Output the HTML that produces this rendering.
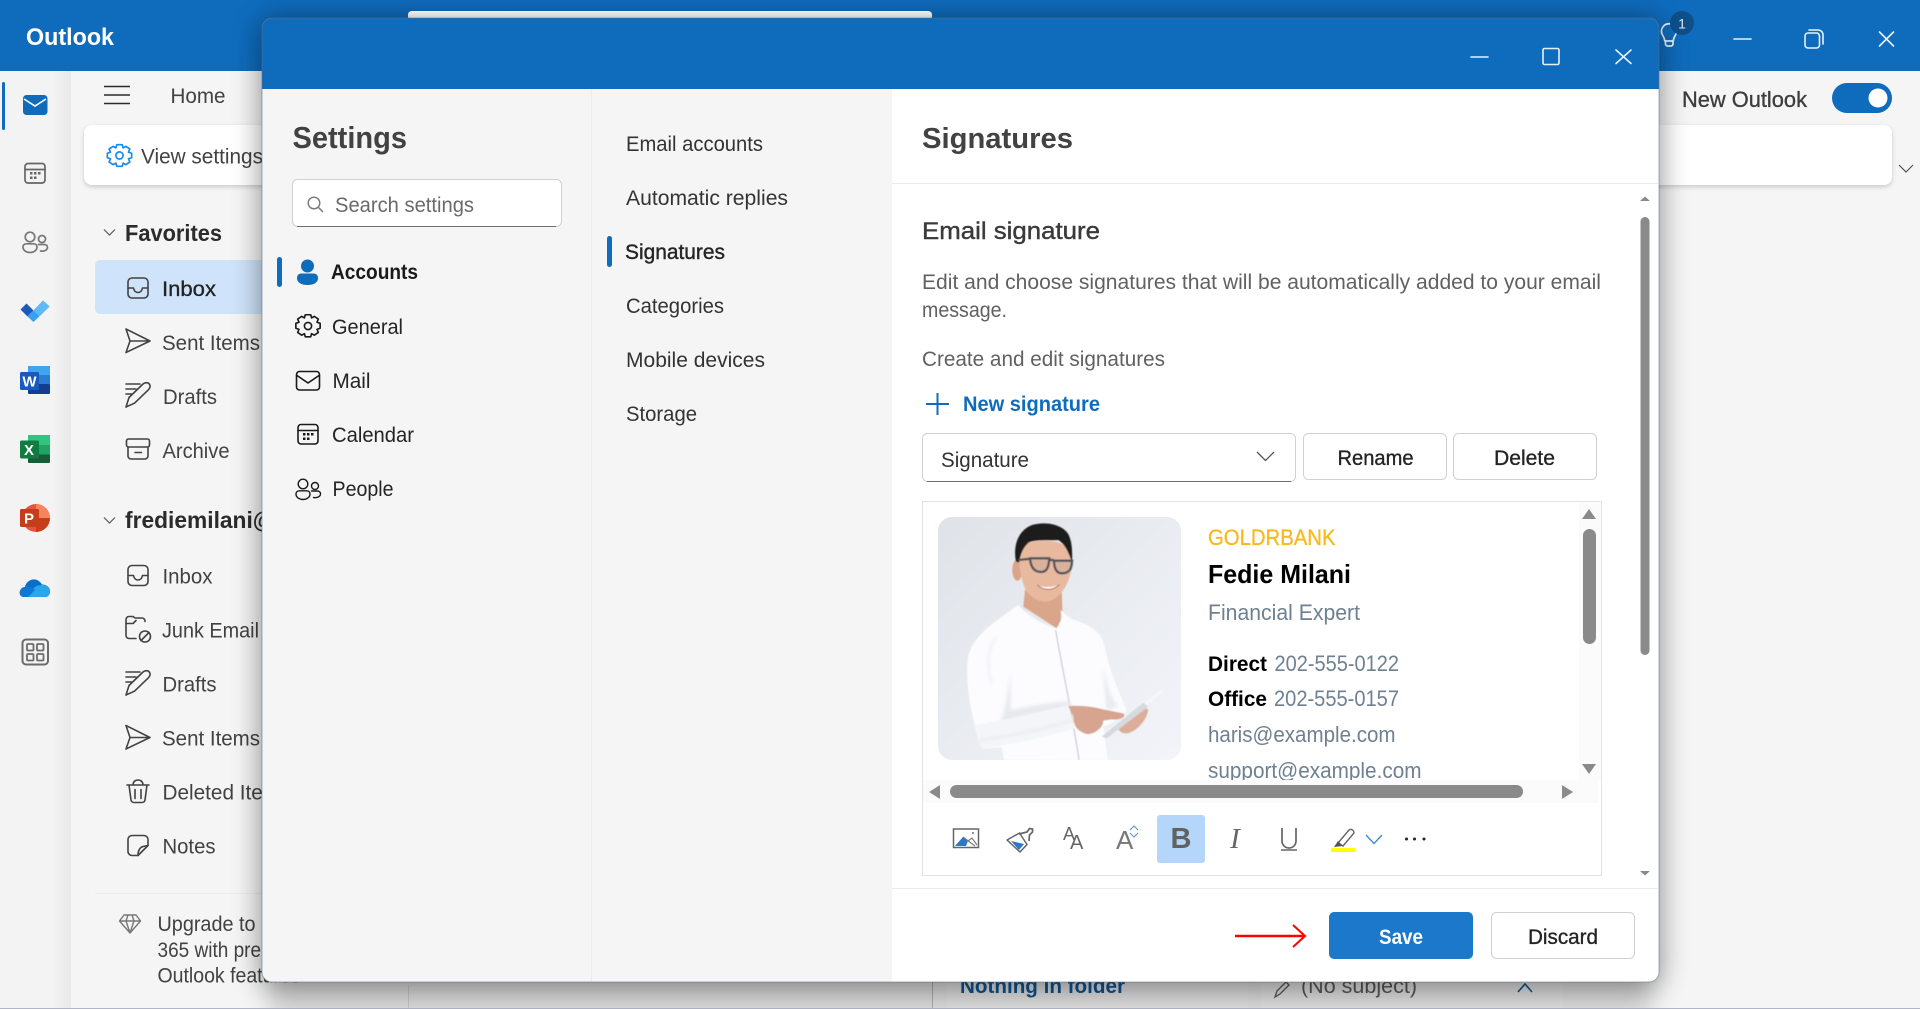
<!DOCTYPE html>
<html lang="en"><head><meta charset="utf-8"><title>Outlook Settings</title>
<style>
html,body{margin:0;padding:0;background:#f5f5f5;width:1920px;height:1009px;overflow:hidden}
svg{display:block}
text{font-family:"Liberation Sans",sans-serif;font-size:21.5px;fill:#424242}
.d{fill:#242424}
.b{font-weight:700}
.g{fill:#616161}
.t{fill:#6f8090;font-size:22px}
.ic{fill:none;stroke:#424242;stroke-width:1.6;stroke-linecap:round;stroke-linejoin:round}
.ik{fill:none;stroke:#1a1a1a;stroke-width:1.6;stroke-linecap:round;stroke-linejoin:round}
.ig{fill:none;stroke:#666;stroke-width:1.7;stroke-linecap:round;stroke-linejoin:round}
.w{fill:none;stroke:#e8f1fa;stroke-width:1.6;stroke-linecap:round;stroke-linejoin:round}
</style></head><body>
<svg width="1920" height="1009" viewBox="0 0 1920 1009" xmlns="http://www.w3.org/2000/svg">
<defs>
<filter id="sh" x="-10%" y="-10%" width="120%" height="120%"><feGaussianBlur stdDeviation="15"/></filter>
<filter id="cs" x="-10%" y="-30%" width="120%" height="160%"><feGaussianBlur stdDeviation="2.5"/></filter>
<filter id="bl1" x="-30%" y="-30%" width="160%" height="160%"><feGaussianBlur stdDeviation="5"/></filter>
<filter id="bl0" x="-5%" y="-5%" width="110%" height="110%"><feGaussianBlur stdDeviation="1.8"/></filter>
<filter id="bs" x="-5%" y="-200%" width="110%" height="500%"><feGaussianBlur stdDeviation="12"/></filter>
<linearGradient id="rail" x1="0" x2="1" y1="0" y2="0"><stop offset="0" stop-color="#f3f3f3"/><stop offset=".75" stop-color="#f3f3f3"/><stop offset="1" stop-color="#e9e9e9"/></linearGradient>
<linearGradient id="photo" x1="0" x2="1" y1="0" y2="1"><stop offset="0" stop-color="#dfe3e8"/><stop offset=".5" stop-color="#e9ecf1"/><stop offset="1" stop-color="#f2f4f9"/></linearGradient>
<linearGradient id="sliver" x1="0" x2="0" y1="0" y2="1"><stop offset="0" stop-color="#f0f0f0"/><stop offset="1" stop-color="#c9c9c9"/></linearGradient>
<clipPath id="pc"><rect x="938" y="517" width="243" height="243" rx="14"/></clipPath>
<clipPath id="dc"><rect x="262" y="18" width="1397" height="964" rx="10"/></clipPath>
<clipPath id="sc"><rect x="1200" y="510" width="375" height="270"/></clipPath>
<g id="inbox"><rect x="-10" y="-10" width="20" height="20" rx="4"/><path d="M-10 0h5.500c.6 3 2.500 4.500 4.500 4.500s3.900-1.500 4.500-4.500h5.500"/></g>
<g id="sent"><path d="M-12-12L12 0L-12 11.500L-8 0Z M-8 0H12"/></g>
<g id="drafts"><path d="M-12-11.500h14M-12-6.500h10M-12-1.500h6M-12 11.500l3-9.500l14-13.500c2-1.800 5-1.800 6.300 0c1.300 1.800 1 4-.8 5.700l-14 13.500Z"/></g>
</defs>

<!-- app background -->
<rect width="1920" height="1009" fill="#f5f5f5"/>
<rect y="71" width="71" height="938" fill="url(#rail)"/>
<rect width="1920" height="71" fill="#0f6cbd"/>
<rect x="0" y="1008" width="1920" height="1" fill="#b0b6c8"/>
<text x="26" y="45" textLength="88" lengthAdjust="spacingAndGlyphs" class="b" style="font-size:24px;fill:#fff">Outlook</text>

<!-- rail -->
<rect x="2" y="82" width="3" height="48" rx="1.500" fill="#0f6cbd"/>
<rect x="23" y="95" width="24.500" height="20" rx="3.500" fill="#0f6cbd"/>
<path d="M24 99l11 7l11-7" fill="none" stroke="#fff" stroke-width="1.600"/>
<g class="ig"><rect x="25" y="163.500" width="20" height="19.500" rx="3"/><path d="M25 169.500h20"/></g>
<g fill="#666"><rect x="30" y="172" width="2.500" height="2.500"/><rect x="34" y="172" width="2.500" height="2.500"/><rect x="38" y="172" width="2.500" height="2.500"/><rect x="30" y="176.500" width="2.500" height="2.500"/><rect x="34" y="176.500" width="2.500" height="2.500"/></g>
<g class="ig" style="stroke:#777"><circle cx="30" cy="237" r="4.800"/><circle cx="42" cy="239" r="3.500"/><path d="M23 247c0-2 1.500-3.200 3.500-3.200h7c2 0 3.500 1.200 3.500 3.200c0 3.500-3.500 5.500-7 5.500s-7-2-7-5.500Z"/><path d="M38.500 244.500h5.500c2 0 3.500 1 3.500 2.800c0 2.800-3 4.300-7 3.700"/></g>
<path d="M20.500 309.500l6-6l7 7l-6 6Z" fill="#185abd"/>
<path d="M27.500 316.500l6-6l9.500-10l6.500 6l-16 15.500Z" fill="#3aa0ee"/>
<path d="M33.500 310.500l9.500-10l6.500 6l-10 10Z" fill="#5fb9f6"/>
<!-- word -->
<rect x="28" y="366" width="22" height="9.500" fill="#41a5ee"/><rect x="28" y="375" width="22" height="9.500" fill="#2b7cd3"/><rect x="28" y="384" width="22" height="10" rx="1" fill="#103f91"/>
<rect x="20" y="372" width="19" height="18" rx="1.500" fill="#185abd"/>
<text x="29.500" y="386.500" text-anchor="middle" class="b" style="font-size:15px;fill:#fff">W</text>
<!-- excel -->
<rect x="28" y="435" width="22" height="10" fill="#33c481"/><rect x="28" y="445" width="22" height="9.500" fill="#107c41"/><rect x="28" y="454" width="22" height="9" rx="1" fill="#185c37"/><rect x="39" y="445" width="11" height="9.500" fill="#21a366"/>
<rect x="20" y="440.500" width="19" height="18" rx="1.500" fill="#107c41"/>
<text x="29" y="455" text-anchor="middle" class="b" style="font-size:15px;fill:#fff">X</text>
<!-- ppt -->
<circle cx="36" cy="518" r="14" fill="#e8533a"/><path d="M36 504a14 14 0 0 1 14 14h-14Z" fill="#f6845c"/><path d="M36 518h14a14 14 0 0 1-14 14Z" fill="#c43e1c"/>
<rect x="20" y="509" width="19" height="18" rx="1.500" fill="#c43e1c"/>
<text x="29" y="523.500" text-anchor="middle" class="b" style="font-size:15px;fill:#fff">P</text>
<!-- onedrive -->
<path d="M24 597c-6 0-6-9 1-10c1-6 8-9.500 13-6.500c2 1 3 2.500 4 4c5 0 8.500 3.500 8 7c0 3-2 5.500-5 5.500Z" fill="#0a6fc9"/>
<path d="M29 597c-3-1-2-6 2-6c3-4 6-6 11-6c5 0 8.500 3.500 8 7c0 3-2 5-5 5Z" fill="#28a8ea"/>
<path d="M20 592c.5-3 2-5 5-5c4-1 7 0 10 3c-3 2-5 7-9 7h-2c-3 0-4-2-4-5Z" fill="#0f78d4"/>
<g fill="none" stroke="#6b6b6b" stroke-width="2"><rect x="22.500" y="639.500" width="25.500" height="25" rx="3.500"/></g>
<g fill="none" stroke="#6b6b6b" stroke-width="1.800"><rect x="27" y="644" width="6.500" height="6.500" rx="1"/><rect x="37" y="644" width="6.500" height="6.500" rx="1"/><rect x="27" y="654" width="6.500" height="6.500" rx="1"/><rect x="37" y="654" width="6.500" height="6.500" rx="1"/></g>

<!-- nav top -->
<path d="M104 86.500h26M104 95h26M104 103.500h26" stroke="#2b2b2b" stroke-width="1.500"/>
<text x="170.500" y="103" textLength="55" lengthAdjust="spacingAndGlyphs">Home</text>
<rect x="84" y="127" width="1808" height="60" rx="8" fill="#000" opacity=".17" filter="url(#cs)"/>
<rect x="84" y="125" width="1808" height="60" rx="8" fill="#fff"/>
<g transform="translate(119.500 155.500) scale(.9)" fill="none" stroke="#1c8be6" stroke-width="1.900" stroke-linejoin="round"><circle r="4"/><path d="M-3-12h6l1 3.500l3-1.700l4.500 3l-1.500 3.500l3.500 1.200v5l-3.500 1.200l1.500 3.500l-4.500 3l-3-1.700l-1 3.500h-6l-1-3.500l-3 1.700l-4.500-3l1.500-3.500l-3.500-1.200v-5l3.500-1.200l-1.500-3.500l4.500-3l3 1.700Z"/></g>
<text x="141" y="163.500" textLength="122" lengthAdjust="spacingAndGlyphs">View settings</text>
<path d="M104 229.500l5.500 5.500l5.500-5.500" fill="none" stroke="#555" stroke-width="1.200"/>
<text x="125" y="241" textLength="97" lengthAdjust="spacingAndGlyphs" class="b" style="font-size:23px;fill:#2b2b2b">Favorites</text>
<rect x="95" y="260" width="190" height="54" rx="5" fill="#cfe4fa"/>
<use href="#inbox" x="138" y="288" class="ic"/>
<text x="162" y="296" textLength="54" lengthAdjust="spacingAndGlyphs" style="fill:#222;stroke:#222;stroke-width:.3">Inbox</text>
<use href="#sent" x="138" y="341" class="ic"/>
<text x="162" y="350" textLength="98" lengthAdjust="spacingAndGlyphs">Sent Items</text>
<use href="#drafts" x="138" y="395.500" class="ic"/>
<text x="163" y="404" textLength="54" lengthAdjust="spacingAndGlyphs">Drafts</text>
<g class="ic"><rect x="126.500" y="439" width="23" height="8" rx="2"/><path d="M128 447v9a3 3 0 0 0 3 3h14a3 3 0 0 0 3-3v-9M135 452.500h6.500"/></g>
<text x="162.500" y="458" textLength="67" lengthAdjust="spacingAndGlyphs">Archive</text>
<path d="M104 517.500l5.500 5.500l5.500-5.500" fill="none" stroke="#555" stroke-width="1.200"/>
<text x="125" y="528" textLength="150" lengthAdjust="spacingAndGlyphs" class="b" style="font-size:23px;fill:#2b2b2b">frediemilani@</text>
<use href="#inbox" x="138" y="575.500" class="ic"/>
<text x="162.500" y="583.500" textLength="50" lengthAdjust="spacingAndGlyphs">Inbox</text>
<g class="ic" transform="translate(0 .5)"><path d="M145 621v-.5a3 3 0 0 0-3-3h-7l-2-1.500h-4a3 3 0 0 0-3 3v16a3 3 0 0 0 3 3h7"/><path d="M126 623h7l3-3"/><circle cx="145" cy="636" r="5.500"/><path d="M141 640l8-8"/></g>
<text x="162" y="637.500" textLength="97" lengthAdjust="spacingAndGlyphs">Junk Email</text>
<use href="#drafts" x="138" y="683.500" class="ic"/>
<text x="162.500" y="691.500" textLength="54" lengthAdjust="spacingAndGlyphs">Drafts</text>
<use href="#sent" x="138" y="737.500" class="ic"/>
<text x="162" y="745.500" textLength="98" lengthAdjust="spacingAndGlyphs">Sent Items</text>
<g class="ic" transform="translate(0 .5)"><path d="M127 784.500h22M133 784.500c0-3 2-5 5-5s5 2 5 5M129 784.500l2 15a3 3 0 0 0 3 2.500h8a3 3 0 0 0 3-2.500l2-15M135 789v9M141 789v9"/></g>
<text x="162.500" y="799.500" textLength="128" lengthAdjust="spacingAndGlyphs">Deleted Items</text>
<g class="ic" transform="translate(0 .5)"><path d="M148 845v-6a4 4 0 0 0-4-4h-12a4 4 0 0 0-4 4v12a4 4 0 0 0 4 4h6Z"/><path d="M138 855c0-5 2-8 5-9l5-1"/></g>
<text x="162.500" y="853.500" textLength="53" lengthAdjust="spacingAndGlyphs">Notes</text>
<rect x="95" y="893" width="170" height="1" fill="#ebebeb"/>
<g fill="none" stroke="#777" stroke-width="1.400" stroke-linejoin="round"><path d="M124 915h12l4.500 6l-10.500 12l-10.500-12ZM119.500 921h21M126 921l4 12l4-12M126 921l2-6M134 921l-2-6"/></g>
<text x="157.500" y="931" textLength="98" lengthAdjust="spacingAndGlyphs" style="font-size:21px">Upgrade to</text>
<text x="157.500" y="957" textLength="150" lengthAdjust="spacingAndGlyphs" style="font-size:21px">365 with premium</text>
<text x="157.500" y="982.500" textLength="143" lengthAdjust="spacingAndGlyphs" style="font-size:21px">Outlook features</text>

<!-- right side chrome -->
<g class="w" style="stroke-width:1.700"><path d="M1662.500 35a7.500 7.500 0 1 1 13 0c-1.200 2-2 3.500-2.300 6h-8.400c-.3-2.500-1.100-4-2.300-6Z"/><path d="M1665.500 41v3a2 2 0 0 0 2 2h3.500a2 2 0 0 0 2-2v-3"/></g>
<circle cx="1682" cy="23" r="12" fill="#0f4f8a"/>
<text x="1682" y="28.500" text-anchor="middle" style="font-size:14px;fill:#dfe9f3">1</text>
<path d="M1734 39h17" class="w"/>
<g class="w"><rect x="1805" y="33" width="14.500" height="15" rx="3"/><path d="M1809 30h9a5 5 0 0 1 5 5v9"/></g>
<path d="M1879.500 32l14 14M1893.500 32l-14 14" class="w"/>
<text x="1682" y="107" textLength="125" lengthAdjust="spacingAndGlyphs" style="font-size:22.500px;fill:#3d3d3d;stroke:#3d3d3d;stroke-width:.35">New Outlook</text>
<rect x="1832" y="83" width="60" height="30" rx="15" fill="#0f6cbd"/>
<circle cx="1878" cy="98" r="9.500" fill="#fff"/>
<path d="M1899 165l7 7l7-7" fill="none" stroke="#555" stroke-width="1.200"/>

<!-- bottom reading pane pieces -->
<rect x="408" y="985" width="1" height="24" fill="#ddd"/>
<rect x="932" y="982" width="1" height="27" fill="#bdbdbd"/>
<rect x="947" y="982" width="301" height="26" fill="#f9f9f9"/>
<rect x="1261" y="982" width="302" height="26" fill="#f9f9f9"/>
<text x="960" y="993" textLength="165" lengthAdjust="spacingAndGlyphs" class="b" style="font-size:21px;fill:#115ea3">Nothing in folder</text>
<path d="M1275 997l2-6l9-9l3 3l-9 9Z" fill="none" stroke="#666" stroke-width="1.400"/>
<text x="1301" y="993" textLength="116" lengthAdjust="spacingAndGlyphs" style="font-size:21px;fill:#616161">(No subject)</text>
<path d="M1518 992l7-8l7 8" fill="none" stroke="#115ea3" stroke-width="1.600"/>
<rect x="270" y="960" width="1381" height="60" fill="#000" opacity=".13" filter="url(#bs)"/>
<rect x="0" y="1008" width="1920" height="1" fill="#b0b6c8"/>

<!-- top sliver behind dialog -->
<rect x="408" y="11" width="524" height="20" rx="4" fill="#f2f2f2"/>
<!-- dialog shadow -->
<rect x="262" y="20" width="1397" height="966" rx="10" fill="#000" opacity=".46" filter="url(#sh)"/>
<rect x="408" y="11" width="524" height="8" rx="4" fill="url(#sliver)"/>

<!-- dialog -->
<g clip-path="url(#dc)">
<rect x="262" y="18" width="1397" height="964" fill="#fff"/>
<rect x="262" y="89" width="630" height="893" fill="#f5f5f5"/>
<rect x="591" y="89" width="1" height="893" fill="#ebebeb"/>
<rect x="262" y="18" width="1397" height="71" fill="#0f6cbd"/>
</g>
<rect x="262" y="18" width="1397" height="964" rx="10" fill="none" stroke="#5b6f88" stroke-opacity=".55" stroke-width="1"/>
<path d="M1471 57h17" class="w"/>
<rect x="1543" y="48.500" width="16" height="16" rx="1.500" class="w"/>
<path d="M1616 50l15 13.500M1631 50l-15 13.500" class="w"/>

<!-- settings col -->
<text x="292.500" y="148" textLength="114.500" lengthAdjust="spacingAndGlyphs" class="b" style="font-size:31px;fill:#424242">Settings</text>
<rect x="292.500" y="179.500" width="269" height="47" rx="5" fill="#fff" stroke="#d1d1d1"/>
<path d="M297 226.500h259" stroke="#6e6e6e" stroke-width="1"/>
<g fill="none" stroke="#777" stroke-width="1.400"><circle cx="314" cy="203" r="5.800"/><path d="M318.500 207.500l4.500 4.500"/></g>
<text x="335" y="212" textLength="139" lengthAdjust="spacingAndGlyphs" class="g" style="font-size:21.500px;fill:#6a6a6a">Search settings</text>
<rect x="277" y="257" width="5" height="30" rx="2.500" fill="#0f6cbd"/>
<circle cx="307.500" cy="266" r="6.500" fill="#0f6cbd"/>
<path d="M297 278c0-3 2-4.500 4.500-4.500h12c2.500 0 4.500 1.500 4.500 4.500c0 5-5 7-10.500 7s-10.500-2-10.500-7Z" fill="#0f6cbd"/>
<text x="331" y="279" textLength="87" lengthAdjust="spacingAndGlyphs" class="b" style="fill:#1a1a1a;font-size:21px">Accounts</text>
<g transform="translate(308 326) scale(.9)" class="ik" style="stroke-width:1.800"><circle r="4"/><path d="M-3-12.500h6l1 3.500l3-1.700l4.500 3l-1.500 3.500l3.500 1.200v5.500l-3.500 1.200l1.500 3.500l-4.500 3l-3-1.700l-1 3.500h-6l-1-3.500l-3 1.700l-4.500-3l1.500-3.500l-3.500-1.200v-5.500l3.500-1.200l-1.500-3.500l4.500-3l3 1.700Z"/></g>
<text x="332" y="334" textLength="71" lengthAdjust="spacingAndGlyphs" class="d">General</text>
<g class="ik"><rect x="296.500" y="371.500" width="23" height="18.500" rx="3"/><path d="M297 375.500l11 7.500l11-7.500"/></g>
<text x="332.500" y="388" textLength="38" lengthAdjust="spacingAndGlyphs" class="d">Mail</text>
<g class="ik"><rect x="298" y="424.500" width="20" height="19.500" rx="3"/><path d="M298 430.500h20"/></g>
<g fill="#1a1a1a"><rect x="303" y="433" width="2.500" height="2.500"/><rect x="307" y="433" width="2.500" height="2.500"/><rect x="311" y="433" width="2.500" height="2.500"/><rect x="303" y="437.500" width="2.500" height="2.500"/><rect x="307" y="437.500" width="2.500" height="2.500"/></g>
<text x="332" y="442" textLength="82" lengthAdjust="spacingAndGlyphs" class="d">Calendar</text>
<g class="ik" style="stroke-width:1.400"><circle cx="303" cy="484" r="4.800"/><circle cx="315" cy="486" r="3.500"/><path d="M296 494c0-2 1.500-3.200 3.500-3.200h7c2 0 3.500 1.200 3.500 3.200c0 3.500-3.500 5.500-7 5.500s-7-2-7-5.500Z"/><path d="M311.500 491h5.500c2 0 3.500 1 3.500 2.800c0 2.800-3 4.300-7 3.700"/></g>
<text x="332.500" y="496" textLength="61" lengthAdjust="spacingAndGlyphs" class="d">People</text>

<!-- mid col -->
<text x="626" y="151" textLength="137" lengthAdjust="spacingAndGlyphs" class="d" style="fill:#333">Email accounts</text>
<text x="626" y="205" textLength="162" lengthAdjust="spacingAndGlyphs" class="d" style="fill:#333">Automatic replies</text>
<rect x="607" y="236" width="5" height="31" rx="2.500" fill="#0f6cbd"/>
<text x="625" y="259" textLength="100" lengthAdjust="spacingAndGlyphs" class="d" style="stroke:#242424;stroke-width:.4">Signatures</text>
<text x="626" y="313" textLength="98" lengthAdjust="spacingAndGlyphs" class="d" style="fill:#333">Categories</text>
<text x="626" y="367" textLength="139" lengthAdjust="spacingAndGlyphs" class="d" style="fill:#333">Mobile devices</text>
<text x="626" y="421" textLength="71" lengthAdjust="spacingAndGlyphs" class="d" style="fill:#333">Storage</text>

<!-- right -->
<text x="922" y="148" textLength="151" lengthAdjust="spacingAndGlyphs" class="b" style="font-size:29px;fill:#424242">Signatures</text>
<rect x="892" y="183" width="766" height="1" fill="#ebebeb"/>
<path d="M1640 201h10l-5-4.500Z" fill="#8a8a8a"/>
<rect x="1640.500" y="217" width="9" height="438" rx="4.500" fill="#8a8a8a"/>
<path d="M1640 871h10l-5 4.500Z" fill="#8a8a8a"/>
<text x="922" y="239" textLength="178" lengthAdjust="spacingAndGlyphs" style="font-size:24px;fill:#3a3a3a;stroke:#3a3a3a;stroke-width:.4">Email signature</text>
<text x="922" y="289" textLength="679" lengthAdjust="spacingAndGlyphs" class="g">Edit and choose signatures that will be automatically added to your email</text>
<text x="922" y="317" textLength="85" lengthAdjust="spacingAndGlyphs" class="g">message.</text>
<text x="922" y="366" textLength="243" lengthAdjust="spacingAndGlyphs" class="g">Create and edit signatures</text>
<path d="M926 404h23M937.500 393v22" stroke="#0f6cbd" stroke-width="2"/>
<text x="963" y="411" textLength="137" lengthAdjust="spacingAndGlyphs" class="b" style="fill:#0f6cbd;font-size:21px">New signature</text>
<rect x="922.500" y="433.500" width="373" height="48" rx="5" fill="#fff" stroke="#d1d1d1"/>
<path d="M927 481.500h364" stroke="#6e6e6e" stroke-width="1"/>
<text x="941" y="467" textLength="88" lengthAdjust="spacingAndGlyphs" class="d" style="fill:#333">Signature</text>
<path d="M1257 452l8.500 8.500l8.500-8.500" fill="none" stroke="#555" stroke-width="1.300"/>
<rect x="1303.500" y="433.500" width="143" height="46" rx="5" fill="#fff" stroke="#d1d1d1"/>
<text x="1337.500" y="465" textLength="76" lengthAdjust="spacingAndGlyphs" class="d" style="stroke:#242424;stroke-width:.35">Rename</text>
<rect x="1453.500" y="433.500" width="143" height="46" rx="5" fill="#fff" stroke="#d1d1d1"/>
<text x="1494" y="465" textLength="61" lengthAdjust="spacingAndGlyphs" class="d" style="stroke:#242424;stroke-width:.35">Delete</text>

<!-- editor box -->
<rect x="922.500" y="501.500" width="679" height="374" fill="#fff" stroke="#e2e2e2"/>
<rect x="1579" y="503" width="22" height="278" fill="#fbfbfb"/>
<rect x="923" y="780" width="675" height="23" fill="#fbfbfb"/>

<!-- photo -->
<g clip-path="url(#pc)">
<rect x="938" y="517" width="243" height="243" fill="url(#photo)"/>
<g transform="translate(930 510) scale(.33333)" filter="url(#bl0)">
<path d="M285 240L395 240L398 320L380 355L280 290Z" fill="#d9a68c"/>
<path d="M265 285C290 315 340 345 378 355C395 345 395 320 392 300L420 325C465 340 505 355 520 395C535 470 565 545 590 600L575 625L520 650L533 750L222 750L215 712L155 715C130 650 105 530 113 450C120 385 180 345 265 285Z" fill="#fcfcfe"/>
<path d="M377 360C395 470 425 600 447 750" fill="none" stroke="#c4c8cf" stroke-width="3.500"/>
<path d="M245 470C238 530 245 570 240 600C300 590 360 575 420 575L425 590C360 605 290 615 210 640C230 590 235 530 245 470Z" fill="#e6e9ee" filter="url(#bl1)"/>
<path d="M520 470C530 520 540 560 565 590L530 600C525 560 520 520 520 470Z" fill="#e8ebf0" filter="url(#bl1)"/>
<path d="M200 380C170 420 170 470 185 520" fill="none" stroke="#eceef2" stroke-width="6" filter="url(#bl1)"/>
<path d="M135 645C200 635 320 610 415 585L435 655C350 680 240 705 155 715Z" fill="#f4f5f8"/>
<path d="M150 690C230 680 330 660 430 630" fill="none" stroke="#e2e5ea" stroke-width="4" filter="url(#bl1)"/>
<path d="M415 588C450 585 490 590 520 598L580 610C590 620 570 632 545 628L520 632C520 655 490 675 470 672C445 665 430 650 430 620Z" fill="#d7a58f"/>
<path d="M565 650L640 590L655 600C650 630 620 665 590 670C575 670 565 665 565 650Z" fill="#dcae99"/>
<path d="M515 680L695 538L698 546L530 682Z" fill="#f6f7f9"/>
<path d="M515 680L640 578L655 590L530 685Z" fill="#d6dade"/>
<ellipse cx="262" cy="180" rx="15" ry="32" fill="#d9a488"/>
<path d="M268 120C268 85 420 75 425 135C430 190 410 245 370 268C340 285 300 265 285 235C272 205 265 160 268 120Z" fill="#e9b99f"/>
<path d="M258 155C248 105 266 58 310 44C355 32 412 48 420 85C427 105 427 135 426 160C417 125 402 100 385 90C360 92 310 88 296 98C280 112 272 130 267 158Z" fill="#1e1c1b"/>
<g fill="none" stroke="#50545a" stroke-width="7"><path d="M265 150L302 146"/><path d="M300 145H358C356 170 352 185 335 186C312 187 302 170 300 145Z" fill="#bfa294" fill-opacity=".35"/><path d="M372 152H426C425 175 420 190 395 190C380 190 372 175 372 152Z" fill="#bfa294" fill-opacity=".35"/><path d="M358 150H372"/></g>
<path d="M322 225C345 235 370 232 388 224C380 240 335 242 322 225Z" fill="#fff"/>
<path d="M322 225C345 245 372 240 388 224" fill="none" stroke="#b0655a" stroke-width="3"/>
</g>
</g>

<!-- signature text -->
<g clip-path="url(#sc)">
<text x="1208" y="545" textLength="127.500" lengthAdjust="spacingAndGlyphs" style="font-size:22px;fill:#f9b91a;stroke:#f9b91a;stroke-width:.3">GOLDRBANK</text>
<text x="1208" y="583" textLength="143" lengthAdjust="spacingAndGlyphs" class="b" style="font-size:26px;fill:#000">Fedie Milani</text>
<text x="1208" y="620" textLength="152" lengthAdjust="spacingAndGlyphs" class="t">Financial Expert</text>
<text x="1208" y="671" textLength="59" lengthAdjust="spacingAndGlyphs" class="b" style="font-size:21px;fill:#000">Direct</text>
<text x="1274.500" y="671" textLength="124.500" lengthAdjust="spacingAndGlyphs" class="t">202-555-0122</text>
<text x="1208" y="706" textLength="59" lengthAdjust="spacingAndGlyphs" class="b" style="font-size:21px;fill:#000">Office</text>
<text x="1274" y="706" textLength="125" lengthAdjust="spacingAndGlyphs" class="t">202-555-0157</text>
<text x="1208" y="742" textLength="187.500" lengthAdjust="spacingAndGlyphs" class="t">haris@example.com</text>
<text x="1208" y="778" textLength="213.500" lengthAdjust="spacingAndGlyphs" class="t">support@example.com</text>
</g>

<!-- inner scrollbars -->
<path d="M1582 519h14l-7-10Z" fill="#8a8a8a"/>
<rect x="1583" y="529" width="13" height="115" rx="6.500" fill="#8a8a8a"/>
<path d="M1582 764h14l-7 10Z" fill="#8a8a8a"/>
<path d="M940 785v14l-11-7Z" fill="#8a8a8a"/>
<rect x="950" y="785" width="573" height="13" rx="6.500" fill="#8a8a8a"/>
<path d="M1562 785v14l11-7Z" fill="#8a8a8a"/>

<!-- toolbar -->
<rect x="953.500" y="829" width="25" height="18.500" fill="#fff" stroke="#666" stroke-width="1.500"/>
<path d="M955 846l8-9l5 4l-2 5Z" fill="#2b78c8"/>
<path d="M963 837l12 9M968 841l4-3l5 7" fill="none" stroke="#777" stroke-width="1.100"/>
<circle cx="973" cy="833" r="1" fill="#777"/>
<path d="M1007 840l12.500-7l7.500 11.500l-7 7.500Z" fill="#fff" stroke="#666" stroke-width="1.500" stroke-linejoin="round"/>
<path d="M1011 841l13 3l-5 6Z" fill="#2b78c8"/>
<path d="M1019 834l8-2l2.500-3.500l3 0.500l0 3l-3 3l-.5 6" fill="none" stroke="#666" stroke-width="1.700"/>
<text x="1063" y="840" style="font-size:18px;fill:#666">A</text>
<text x="1070" y="849" style="font-size:20px;fill:#666">A</text>
<text x="1116" y="849" style="font-size:26px;fill:#777">A</text>
<path d="M1130 830l4-4l4 4M1130 833l4 4l4-4" fill="none" stroke="#4d94dc" stroke-width="1"/>
<rect x="1157" y="815" width="48" height="48" rx="3" fill="#b4d6fa"/>
<text x="1181" y="848" text-anchor="middle" class="b" style="font-size:29px;fill:#616161">B</text>
<text x="1235" y="848" text-anchor="middle" style="font-family:'Liberation Serif',serif;font-style:italic;font-size:29px;fill:#666">I</text>
<path d="M1282 828v13a7 7 0 0 0 14 0v-13" fill="none" stroke="#666" stroke-width="1.700"/>
<path d="M1281 850h16" stroke="#666" stroke-width="1.500"/>
<path d="M1338 843l11-13c2-1.500 5 0 5 3l-11 13Z" fill="#fff" stroke="#666" stroke-width="1.400" stroke-linejoin="round"/>
<path d="M1334 847l4-6l5 5Z" fill="#555"/>
<rect x="1331" y="848" width="24" height="4" fill="#ffff00"/>
<path d="M1366 835l8 8.500l8-8.500" fill="none" stroke="#3f8ad4" stroke-width="1.300"/>
<circle cx="1406.500" cy="839" r="1.500" fill="#222"/><circle cx="1414.500" cy="839" r="1.500" fill="#222"/><circle cx="1424" cy="839" r="1.500" fill="#222"/>

<!-- footer -->
<rect x="892" y="888" width="766" height="1" fill="#ebebeb"/>
<path d="M1235 936h69" stroke="#f00" stroke-width="2.400"/>
<path d="M1293 925l12 11l-12 11" fill="none" stroke="#f00" stroke-width="2"/>
<rect x="1329" y="912" width="144" height="47" rx="5" fill="#1c78cb"/>
<text x="1379" y="944" textLength="44" lengthAdjust="spacingAndGlyphs" class="b" style="font-size:21px;fill:#fff">Save</text>
<rect x="1491.500" y="912.500" width="143" height="46" rx="5" fill="#fff" stroke="#d1d1d1"/>
<text x="1528" y="944" textLength="70" lengthAdjust="spacingAndGlyphs" class="d" style="stroke:#242424;stroke-width:.35">Discard</text>
</svg>
</body></html>
